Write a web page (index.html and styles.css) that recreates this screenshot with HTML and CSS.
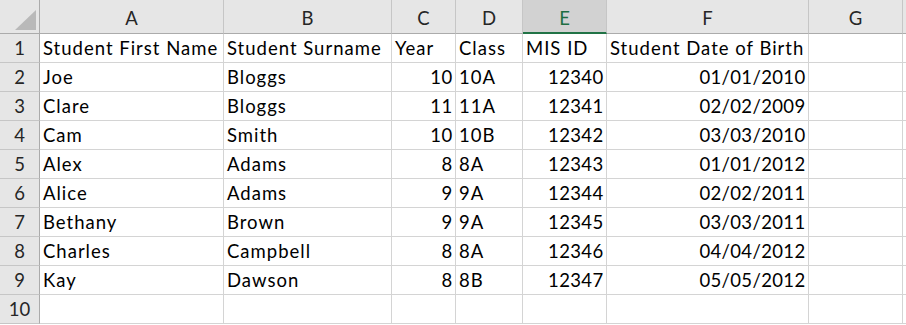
FILE: index.html
```html
<!DOCTYPE html>
<html>
<head>
<meta charset="utf-8">
<link rel="stylesheet" href="styles.css">
</head>
<body>
<div class="sheet">
  <div class="corner"><svg class="tri" width="21" height="20" viewBox="0 0 21 20"><polygon points="21,0 21,20 0,20" fill="#b9b9b9"/></svg></div>
  <div class="ch">A</div><div class="ch">B</div><div class="ch">C</div><div class="ch">D</div><div class="ch sel">E</div><div class="ch">F</div><div class="ch">G</div><div class="ch"></div>

  <div class="rh">1</div><div class="c">Student First Name</div><div class="c">Student Surname</div><div class="c">Year</div><div class="c">Class</div><div class="c">MIS ID</div><div class="c">Student Date of Birth</div><div class="c"></div><div class="c"></div>

  <div class="rh">2</div><div class="c">Joe</div><div class="c">Bloggs</div><div class="c n">10</div><div class="c">10A</div><div class="c n">12340</div><div class="c n">01/01/2010</div><div class="c"></div><div class="c"></div>

  <div class="rh">3</div><div class="c">Clare</div><div class="c">Bloggs</div><div class="c n">11</div><div class="c">11A</div><div class="c n">12341</div><div class="c n">02/02/2009</div><div class="c"></div><div class="c"></div>

  <div class="rh">4</div><div class="c">Cam</div><div class="c">Smith</div><div class="c n">10</div><div class="c">10B</div><div class="c n">12342</div><div class="c n">03/03/2010</div><div class="c"></div><div class="c"></div>

  <div class="rh">5</div><div class="c">Alex</div><div class="c">Adams</div><div class="c n">8</div><div class="c">8A</div><div class="c n">12343</div><div class="c n">01/01/2012</div><div class="c"></div><div class="c"></div>

  <div class="rh">6</div><div class="c">Alice</div><div class="c">Adams</div><div class="c n">9</div><div class="c">9A</div><div class="c n">12344</div><div class="c n">02/02/2011</div><div class="c"></div><div class="c"></div>

  <div class="rh">7</div><div class="c">Bethany</div><div class="c">Brown</div><div class="c n">9</div><div class="c">9A</div><div class="c n">12345</div><div class="c n">03/03/2011</div><div class="c"></div><div class="c"></div>

  <div class="rh">8</div><div class="c">Charles</div><div class="c">Campbell</div><div class="c n">8</div><div class="c">8A</div><div class="c n">12346</div><div class="c n">04/04/2012</div><div class="c"></div><div class="c"></div>

  <div class="rh">9</div><div class="c">Kay</div><div class="c">Dawson</div><div class="c n">8</div><div class="c">8B</div><div class="c n">12347</div><div class="c n">05/05/2012</div><div class="c"></div><div class="c"></div>

  <div class="rh">10</div><div class="c"></div><div class="c"></div><div class="c"></div><div class="c"></div><div class="c"></div><div class="c"></div><div class="c"></div><div class="c"></div>
</div>
</body>
</html>
```
FILE: styles.css
```css
html, body {
  margin: 0;
  padding: 0;
  background: #ffffff;
}

.sheet {
  display: grid;
  grid-template-columns: 40px 184px 168px 64px 67px 84px 202px 94px 1fr;
  grid-template-rows: 34px repeat(10, 29px);
  font-family: Lato, "Open Sans", sans-serif;
  font-size: 18.5px;
  color: #000;
  width: 906px;
}

.sheet > div {
  box-sizing: border-box;
  border-right: 1px solid #d4d4d4;
  border-bottom: 1px solid #d4d4d4;
  display: flex;
  align-items: flex-end;
  line-height: 22px;
  padding-bottom: 3px;
  white-space: nowrap;
  overflow: visible;
}

.corner {
  background: #e6e6e6;
  justify-content: flex-start;
  border-right-color: #ababab !important;
  border-bottom-color: #ababab !important;
  align-items: flex-start !important;
  padding: 10px 0 0 15px;
}

.tri {
  display: block;
}

.ch {
  background: #e6e6e6;
  justify-content: center;
  color: #262626;
  border-right-color: #c6c6c6 !important;
  border-bottom-color: #ababab !important;
  padding-bottom: 4px !important;
}

.ch.sel {
  background: #d2d2d2;
  color: #1e6e42;
  border-bottom: 2px solid #217346 !important;
  padding-bottom: 3px !important;
}

.rh {
  background: #e6e6e6;
  justify-content: center;
  color: #262626;
  border-right-color: #ababab !important;
  border-bottom-color: #c6c6c6 !important;
}

.c {
  padding-left: 3px;
  padding-right: 3px;
  letter-spacing: 1px;
}

.c.n {
  justify-content: flex-end;
  letter-spacing: 0.35px;
  padding-right: 2.5px;
}
```
